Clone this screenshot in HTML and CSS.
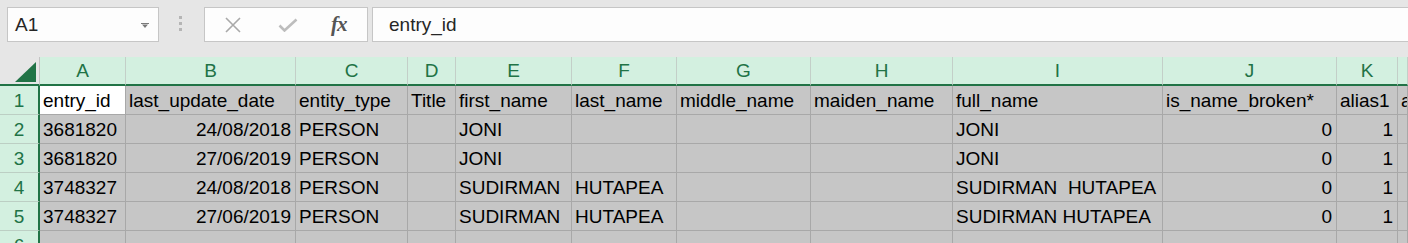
FILE: index.html
```html
<!DOCTYPE html>
<html lang="en">
<head>
  <meta charset="UTF-8">
  <meta name="viewport" content="width=device-width, initial-scale=1.0">
  <title>Sheet1</title>
  <link rel="stylesheet" href="styles.css">
</head>
<body>
  <div class="toolbar">
    <div class="namebox">
      <span>A1</span>
      <svg class="namebox-arrow" width="8" height="5" viewBox="0 0 8 5"><path d="M0 0h8v1H0zM1 1.5h6L4 5z" fill="#7a7a7a"/></svg>
    </div>
    <div class="grip"><i></i><i></i><i></i></div>
    <div class="fbuttons">
      <svg width="18" height="16" viewBox="0 0 18 16"><path d="M2 1l14 14M16 1L2 15" stroke="#a9a9a9" stroke-width="1.6" fill="none"/></svg>
      <svg width="20" height="14" viewBox="0 0 20 14"><path d="M1.5 7.5l5 5L18.5 1.5" stroke="#bdbdbd" stroke-width="2.6" fill="none"/></svg>
      <span class="fx">fx</span>
    </div>
    <div class="finput">entry_id</div>
  </div>

  <div class="sheet">
    <!-- column headers -->
    <div class="corner"><span class="corner-tri"></span></div>
    <div class="colhead">A</div>
    <div class="colhead">B</div>
    <div class="colhead">C</div>
    <div class="colhead">D</div>
    <div class="colhead">E</div>
    <div class="colhead">F</div>
    <div class="colhead">G</div>
    <div class="colhead">H</div>
    <div class="colhead">I</div>
    <div class="colhead">J</div>
    <div class="colhead">K</div>
    <div class="colhead"></div>

    <!-- row 1 -->
    <div class="rowhead">1</div>
    <div class="cell active">entry_id</div>
    <div class="cell">last_update_date</div>
    <div class="cell">entity_type</div>
    <div class="cell">Title</div>
    <div class="cell">first_name</div>
    <div class="cell">last_name</div>
    <div class="cell">middle_name</div>
    <div class="cell">maiden_name</div>
    <div class="cell">full_name</div>
    <div class="cell">is_name_broken*</div>
    <div class="cell">alias1</div>
    <div class="cell">alias2</div>

    <!-- row 2 -->
    <div class="rowhead">2</div>
    <div class="cell">3681820</div>
    <div class="cell num">24/08/2018</div>
    <div class="cell">PERSON</div>
    <div class="cell"></div>
    <div class="cell">JONI</div>
    <div class="cell"></div>
    <div class="cell"></div>
    <div class="cell"></div>
    <div class="cell">JONI</div>
    <div class="cell num">0</div>
    <div class="cell num">1</div>
    <div class="cell"></div>

    <!-- row 3 -->
    <div class="rowhead">3</div>
    <div class="cell">3681820</div>
    <div class="cell num">27/06/2019</div>
    <div class="cell">PERSON</div>
    <div class="cell"></div>
    <div class="cell">JONI</div>
    <div class="cell"></div>
    <div class="cell"></div>
    <div class="cell"></div>
    <div class="cell">JONI</div>
    <div class="cell num">0</div>
    <div class="cell num">1</div>
    <div class="cell"></div>

    <!-- row 4 -->
    <div class="rowhead">4</div>
    <div class="cell">3748327</div>
    <div class="cell num">24/08/2018</div>
    <div class="cell">PERSON</div>
    <div class="cell"></div>
    <div class="cell">SUDIRMAN</div>
    <div class="cell">HUTAPEA</div>
    <div class="cell"></div>
    <div class="cell"></div>
    <div class="cell">SUDIRMAN  HUTAPEA</div>
    <div class="cell num">0</div>
    <div class="cell num">1</div>
    <div class="cell"></div>

    <!-- row 5 -->
    <div class="rowhead">5</div>
    <div class="cell">3748327</div>
    <div class="cell num">27/06/2019</div>
    <div class="cell">PERSON</div>
    <div class="cell"></div>
    <div class="cell">SUDIRMAN</div>
    <div class="cell">HUTAPEA</div>
    <div class="cell"></div>
    <div class="cell"></div>
    <div class="cell">SUDIRMAN HUTAPEA</div>
    <div class="cell num">0</div>
    <div class="cell num">1</div>
    <div class="cell"></div>

    <!-- row 6 -->
    <div class="rowhead">6</div>
    <div class="cell"></div>
    <div class="cell"></div>
    <div class="cell"></div>
    <div class="cell"></div>
    <div class="cell"></div>
    <div class="cell"></div>
    <div class="cell"></div>
    <div class="cell"></div>
    <div class="cell"></div>
    <div class="cell"></div>
    <div class="cell"></div>
    <div class="cell"></div>
  </div>
</body>
</html>
```

FILE: styles.css
```css
* {
  box-sizing: border-box;
}

body {
  margin: 0;
  background-color: #e6e6e6;
  font-family: "Liberation Sans", Arial, sans-serif;
  font-size: 19px;
  color: #000;
  overflow: hidden;
  height: 243px;
}


/* formula bar */

.toolbar {
  display: flex;
  align-items: flex-start;
  height: 57px;
  padding: 7px 0 0 7px;
}

.namebox {
  display: flex;
  align-items: center;
  justify-content: space-between;
  width: 152px;
  height: 35px;
  padding: 0 9px 0 7px;
  background-color: #fdfdfd;
  border: 1px solid #c6c6c6;
  color: #262626;
}

.namebox-arrow {
  margin-top: 2px;
}

.grip {
  display: flex;
  flex-direction: column;
  gap: 3px;
  width: 45px;
  padding: 9px 0 0 20px;
}

.grip i {
  display: block;
  width: 3px;
  height: 3px;
  background-color: #b5b5b5;
}

.fbuttons {
  display: flex;
  align-items: center;
  width: 164px;
  height: 35px;
  padding: 0 0 0 19px;
  background-color: #fdfdfd;
  border: 1px solid #c6c6c6;
}

.fbuttons svg:nth-child(2) {
  margin-left: 36px;
}

.fx {
  margin-left: 33px;
  font-family: "Liberation Serif", "Times New Roman", serif;
  font-style: italic;
  font-weight: bold;
  font-size: 21px;
  color: #555;
  letter-spacing: -1px;
}

.finput {
  flex: 1;
  height: 35px;
  margin-left: 4px;
  padding: 0 0 0 16px;
  line-height: 33px;
  background-color: #fdfdfd;
  border: 1px solid #c6c6c6;
  border-right: none;
  color: #262626;
}


/* grid */

.sheet {
  display: grid;
  grid-template-columns: 40px 86px 170px 112px 48px 116px 105px 134px 142px 210px 174px 61px 1fr;
  grid-template-rows: 29px repeat(6, 29px);
  height: 186px;
  overflow: hidden;
}

.corner {
  position: relative;
  background-color: #e6e6e6;
  border-right: 1px solid #c4c4c4;
  border-bottom: 2px solid #217346;
}

.corner-tri {
  position: absolute;
  left: 15px;
  top: 5px;
  width: 0;
  height: 0;
  border-left: 21px solid transparent;
  border-bottom: 20px solid #217346;
}

.colhead {
  background-color: #d3f0e0;
  border-right: 1px solid #c3cfc8;
  border-bottom: 2px solid #217346;
  color: #217346;
  text-align: center;
  line-height: 28px;
}

.rowhead {
  background-color: #d3f0e0;
  border-right: 2px solid #217346;
  border-bottom: 1px solid #bccfc4;
  color: #217346;
  text-align: center;
  line-height: 29px;
}

.cell {
  height: 29px;
  padding: 0 3px;
  background-color: #c6c6c6;
  border-right: 1px solid #a8a8a8;
  border-bottom: 1px solid #a8a8a8;
  line-height: 30px;
  white-space: pre;
  overflow: hidden;
}

.cell.num {
  text-align: right;
  padding-right: 4px;
}

.cell.active {
  background-color: #fff;
}
```
